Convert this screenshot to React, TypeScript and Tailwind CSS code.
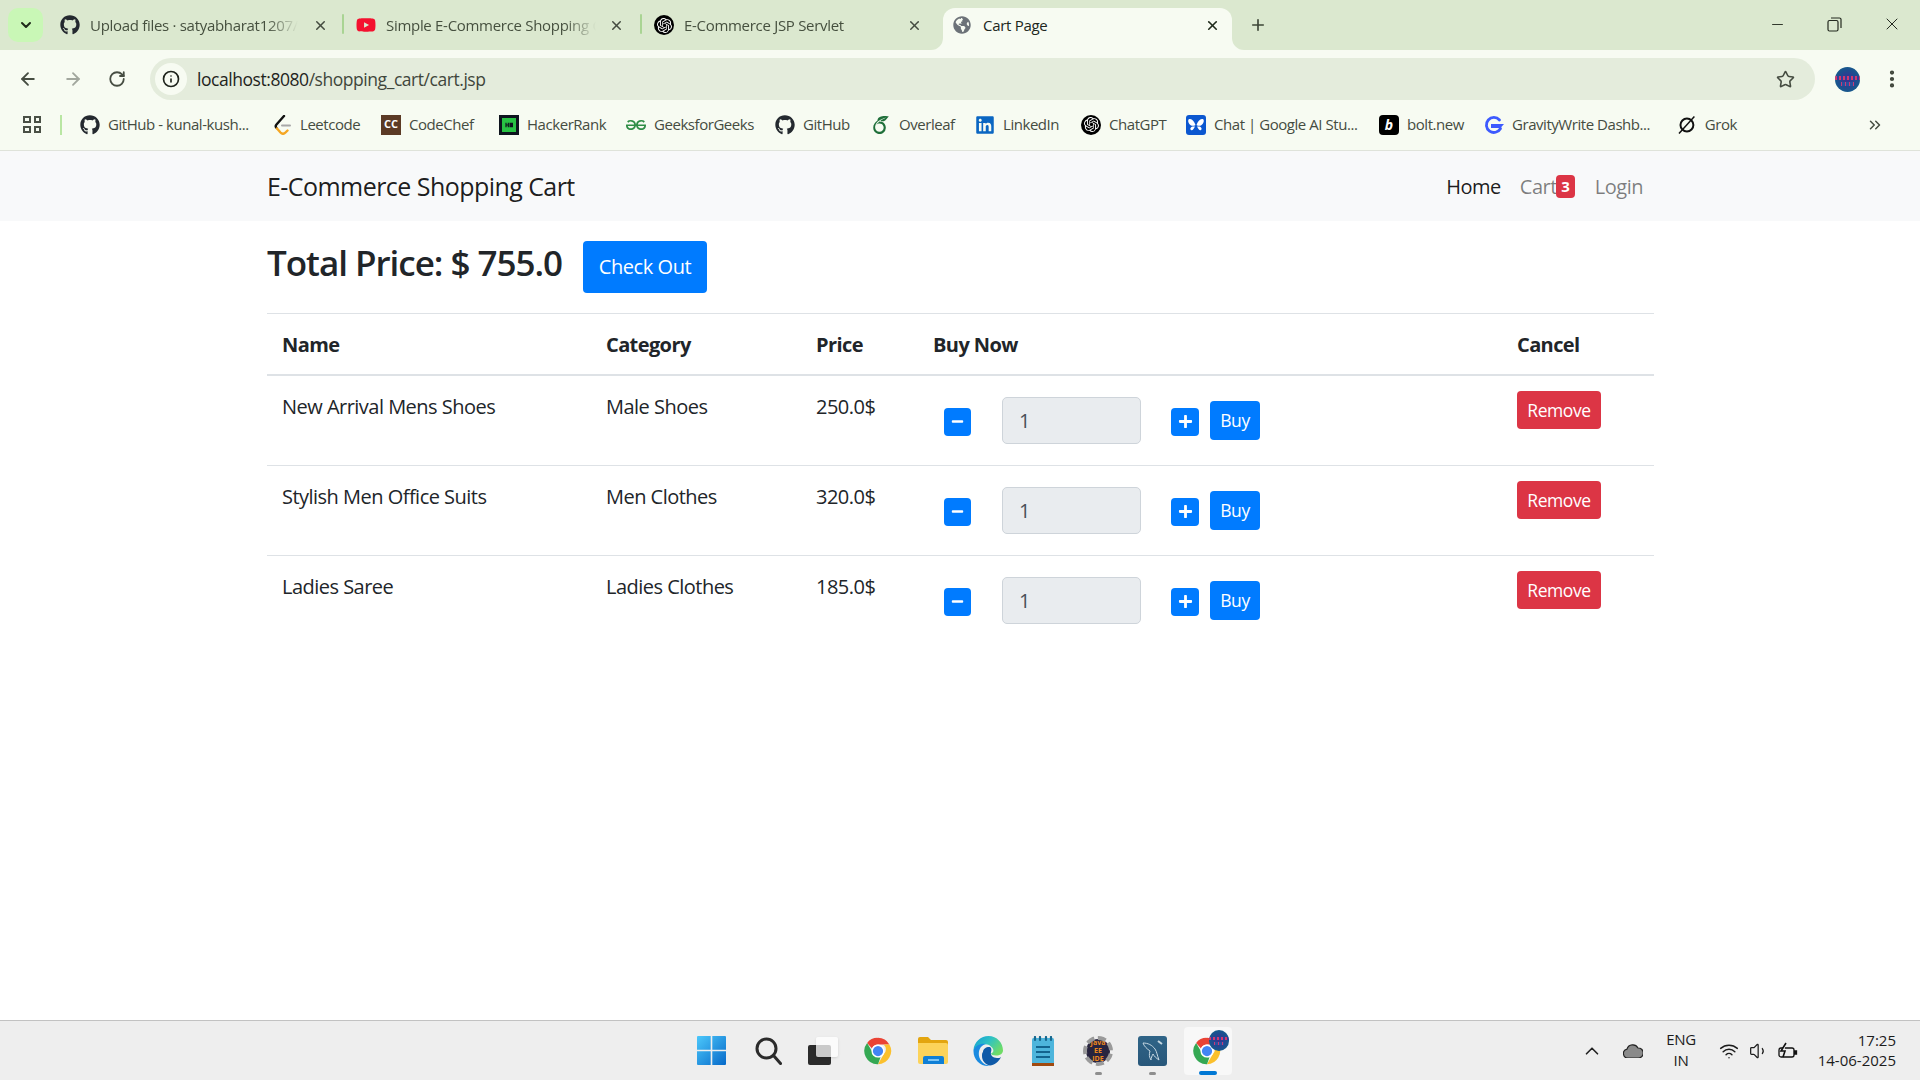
import type { ReactNode } from 'react';
import { ArrowLeft, ArrowRight, ChevronDown, ChevronUp, ChevronsRight, Info, Minus, MoreVertical, Plus, RotateCw, Star, Volume1, Wifi, X } from 'lucide-react';
import { FaGithub, FaGlobeAmericas, FaLinkedin, FaMinus, FaPlus, FaYoutube } from 'react-icons/fa';
import { SiGeeksforgeeks, SiHackerrank, SiOpenai, SiOverleaf } from 'react-icons/si';

const UI_FONT = "font-['Open_Sans','Noto_Sans',sans-serif]";

function GptIcon() {
  return (
    <span className="flex h-[20px] w-[20px] items-center justify-center rounded-full bg-black text-white">
      <SiOpenai className="h-[15px] w-[15px]" />
    </span>
  );
}

function ChromeLogo({ size }: { size: number }) {
  return (
    <svg width={size} height={size} viewBox="0 0 48 48">
      <path d="M24 3a21 21 0 0 1 18.2 10.500H24a10.500 10.500 0 0 0-9.600 6.300L6.600 11.100A21 21 0 0 1 24 3z" fill="#ea4335" />
      <path d="M42.200 13.500A21 21 0 0 1 24 45l9.100-15.700a10.500 10.500 0 0 0-.1-15.800z" fill="#fbc02d" />
      <path d="M6.600 11.100 15 25.600a10.500 10.500 0 0 0 13 8.200L24 45A21 21 0 0 1 6.600 11.100z" fill="#34a853" />
      <circle cx="24" cy="24" r="10.500" fill="#fff" />
      <circle cx="24" cy="24" r="8.200" fill="#4285f4" />
    </svg>
  );
}

function Avatar({ className }: { className: string }) {
  return (
    <span className={`block overflow-hidden rounded-full bg-[radial-gradient(circle_at_50%_50%,#3b2f8f_0%,#1c4f8f_55%,#0f6d86_100%)] ${className}`}>
      <span className="mt-[38%] block h-[14%] w-full bg-[repeating-linear-gradient(90deg,#d0386f_0_2px,#2c3f9c_2px_4px)]" />
      <span className="mx-[25%] mt-[10%] block h-[14%] bg-[repeating-linear-gradient(90deg,#c93a78_0_1px,#27509e_1px_4px)]" />
    </span>
  );
}

type TabInfo = { title: string; icon: ReactNode; titleW: string; tabW: string };

const TABS: TabInfo[] = [
  { title: 'Upload files · satyabharat1207/Simple', icon: <FaGithub className="h-[20px] w-[20px] text-[#24292f]" />, titleW: 'w-[208px]', tabW: 'w-[296px]' },
  { title: 'Simple E-Commerce Shopping Cart', icon: <FaYoutube className="h-[20px] w-[20px] text-[#f4112f]" />, titleW: 'w-[210px]', tabW: 'w-[298px]' },
  { title: 'E-Commerce JSP Servlet', icon: <GptIcon />, titleW: 'w-[210px]', tabW: 'w-[301px]' },
];

function BrowserTabs() {
  return (
    <div className={`flex h-[50px] items-end bg-[#dbe8cf] ${UI_FONT}`}>
      <button className="mb-[8px] ml-[8px] mr-[5px] flex h-[34px] w-[35px] items-center justify-center rounded-[10px] bg-[#c9f7b6]">
        <ChevronDown className="h-[16px] w-[16px] text-[#1f2a1a]" strokeWidth={3} />
      </button>
      {TABS.map((t, i) => (
        <div key={t.title} className={`relative flex h-[42px] items-center pb-[8px] pl-[12px] ${t.tabW}`}>
          {t.icon}
          <span className="ml-[10px] overflow-hidden whitespace-nowrap text-[15px] tracking-[-0.3px] text-[#46503f] [mask-image:linear-gradient(to_right,black_85%,transparent)]">
            <span className={`block ${t.titleW}`}>{t.title}</span>
          </span>
          <X className="absolute left-[265px] h-[15px] w-[15px] text-[#444b40]" strokeWidth={2.400} />
          {i < 2 && <span className="absolute right-0 top-[6px] h-[20px] w-[2px] rounded bg-[#a9d493]" />}
        </div>
      ))}
      <div className="relative flex h-[42px] w-[289px] items-center rounded-t-[12px] bg-[#f7fbf2] pb-[8px] pl-[10px]">
        <svg className="absolute -left-[12px] bottom-0" width="12" height="12" viewBox="0 0 12 12"><path d="M12 0v12H0a12 12 0 0 0 12-12z" fill="#f7fbf2" /></svg>
        <svg className="absolute -right-[12px] bottom-0" width="12" height="12" viewBox="0 0 12 12"><path d="M0 0v12h12A12 12 0 0 1 0 0z" fill="#f7fbf2" /></svg>
        <FaGlobeAmericas className="h-[18px] w-[18px] text-[#6c7278]" />
        <span className="ml-[12px] text-[15px] tracking-[-0.3px] text-[#20261c]">Cart Page</span>
        <X className="absolute right-[12px] h-[15px] w-[15px] text-[#1f2a1a]" strokeWidth={2.600} />
      </div>
      <div className="mb-[8px] ml-[16px] flex h-[34px] w-[20px] items-center justify-center">
        <Plus className="h-[18px] w-[18px] text-[#3d4637]" strokeWidth={2.200} />
      </div>
      <div className="mb-[10px] ml-auto flex h-[32px] items-center text-[#23291f]">
        <Minus className="mr-[41px] h-[17px] w-[17px]" strokeWidth={1.300} />
        <svg className="mr-[40px]" width="15" height="15" viewBox="0 0 15 15" fill="none" stroke="currentColor" strokeWidth="1.200"><rect x="1" y="3.500" width="10" height="10.500" rx="1.500" /><path d="M4 1h8.500A1.500 1.500 0 0 1 14 2.500V11" /></svg>
        <X className="mr-[18px] h-[20px] w-[20px]" strokeWidth={1.200} />
      </div>
    </div>
  );
}

function Toolbar() {
  return (
    <div className={`flex h-[50px] items-center bg-[#f7fbf2] pt-[8px] ${UI_FONT}`}>
      <ArrowLeft className="ml-[18px] h-[20px] w-[20px] text-[#464d42]" strokeWidth={2.200} />
      <ArrowRight className="ml-[25px] h-[20px] w-[20px] text-[#a2a79e]" strokeWidth={2.200} />
      <RotateCw className="ml-[25px] h-[18px] w-[18px] text-[#464d42]" strokeWidth={2.400} />
      <div className="ml-[24px] flex h-[42px] w-[1665px] items-center rounded-full bg-[#e4ecdc] pl-[5px] pr-[20px]">
        <span className="flex h-[32px] w-[32px] items-center justify-center rounded-full bg-[#f7fbf2]">
          <Info className="h-[18px] w-[18px] text-[#1f241c]" strokeWidth={2.200} />
        </span>
        <span className="ml-[10px] text-[17.500px] tracking-[-0.45px] text-[#1f241c]">localhost:8080<span className="text-[#3f463b]">/shopping_cart/cart.jsp</span></span>
        <Star className="ml-auto h-[19px] w-[19px] text-[#454c41]" strokeWidth={2} />
      </div>
      <Avatar className="ml-[20px] h-[25px] w-[25px]" />
      <MoreVertical className="ml-[21px] h-[22px] w-[22px] text-[#3c4338]" strokeWidth={2.600} />
    </div>
  );
}

function CodeTile({ className, children }: { className: string; children: ReactNode }) {
  return <span className={`flex h-[20px] w-[20px] items-center justify-center ${className}`}>{children}</span>;
}

const BOOKMARKS = [
  { label: 'GitHub - kunal-kush...', slot: 'w-[194px]', icon: <FaGithub className="h-[20px] w-[20px] text-[#24292f]" /> },
  {
    label: 'Leetcode',
    slot: 'w-[107px]',
    icon: (
      <svg width="18" height="20" viewBox="0 0 18 20" fill="none" strokeWidth="2.400" strokeLinecap="round">
        <path d="M10 1 2.500 9.500c-1 1.200-1 2.500 0 3.500" stroke="#111" />
        <path d="M3 13.500 6.500 17.500c1.500 1.500 3.500 1.500 5 0l2-2" stroke="#f5a623" />
        <path d="M8 10.500h8" stroke="#a8a8a8" strokeWidth="2" />
      </svg>
    ),
  },
  { label: 'CodeChef', slot: 'w-[118px]', icon: <CodeTile className="bg-[#5b3a25] text-[11px] font-bold text-white">CC</CodeTile> },
  { label: 'HackerRank', slot: 'w-[127px]', icon: <CodeTile className="bg-[#0e141e] text-white"><SiHackerrank className="h-[14px] w-[14px] text-[#28c244]" /></CodeTile> },
  { label: 'GeeksforGeeks', slot: 'w-[149px]', icon: <SiGeeksforgeeks className="h-[20px] w-[20px] text-[#2f8d46]" /> },
  { label: 'GitHub', slot: 'w-[96px]', icon: <FaGithub className="h-[20px] w-[20px] text-[#24292f]" /> },
  { label: 'Overleaf', slot: 'w-[104px]', icon: <SiOverleaf className="h-[18px] w-[20px] text-[#1f6f3a]" /> },
  { label: 'LinkedIn', slot: 'w-[106px]', icon: <FaLinkedin className="h-[20px] w-[20px] text-[#0a66c2]" /> },
  { label: 'ChatGPT', slot: 'w-[105px]', icon: <GptIcon /> },
  {
    label: 'Chat | Google AI Stu...',
    slot: 'w-[193px]',
    icon: (
      <svg width="20" height="20" viewBox="0 0 20 20">
        <rect width="20" height="20" rx="3" fill="#0b57d0" />
        <path d="M9.500 10C8 6 6 3.500 3.500 4S2.500 9 5 10.500c1.500.6 3 .5 4.500-.5zM10.500 10C12 6 14 3.500 16.500 4s1 5-1.500 6.500c-1.500.6-3 .5-4.500-.5z" fill="#fff" />
        <path d="M9 11.500c-1 2-2.500 4.500-4 3.500s0-3 1.500-3.500zM11 11.500c1 2 2.500 4.500 4 3.500s0-3-1.500-3.500z" fill="#fff" />
      </svg>
    ),
  },
  { label: 'bolt.new', slot: 'w-[105px]', icon: <CodeTile className="rounded-[4px] bg-black text-[14px] font-bold italic text-white">b</CodeTile> },
  {
    label: 'GravityWrite Dashb...',
    slot: 'w-[193px]',
    icon: (
      <svg width="20" height="20" viewBox="0 0 20 20" fill="none">
        <path d="M15.500 5A7.500 7.500 0 1 0 16.500 13.500" stroke="#3d5afe" strokeWidth="2.800" strokeLinecap="round" />
        <path d="M7 9h13l-3.500 4H7z" fill="#3d5afe" />
      </svg>
    ),
  },
  { label: 'Grok', slot: 'w-[60px]', icon: <svg width="20" height="20" viewBox="0 0 20 20" fill="none" stroke="#111" strokeWidth="2"><circle cx="10" cy="10" r="6.500" /><path d="M17.500 1.500 2 18.500" strokeWidth="1.500" /></svg> },
];

function BookmarksBar() {
  return (
    <div className={`flex h-[51px] items-center border-b border-[#dfe3da] bg-[#f7fbf2] pb-[1px] ${UI_FONT}`}>
      <span className="ml-[23px] grid h-[17px] w-[18px] grid-cols-2 gap-[3px]">
        <i className="border-2 border-[#4a5046]" />
        <i className="border-2 border-[#4a5046]" />
        <i className="border-2 border-[#4a5046]" />
        <i className="border-2 border-[#4a5046]" />
      </span>
      <span className="ml-[19px] mr-[18px] h-[20px] w-[2px] bg-[#b9e6a3]" />
      {BOOKMARKS.map((b) => (
        <div key={b.label} className={`flex shrink-0 items-center gap-[8px] ${b.slot}`}>
          {b.icon}
          <span className="whitespace-nowrap text-[15px] tracking-[-0.45px] text-[#454c41]">{b.label}</span>
        </div>
      ))}
      <ChevronsRight className="ml-[129px] h-[18px] w-[18px] text-[#454c41]" strokeWidth={2} />
    </div>
  );
}

function Navbar() {
  return (
    <nav className="h-[70px] bg-[#f8f9fa]">
      <div className="ml-[267px] flex h-full w-[1376px] items-center justify-between pt-[2px]">
        <span className="text-[25px] tracking-[-0.55px] text-[#000000e6]">E-Commerce Shopping Cart</span>
        <div className="flex items-center text-[20px] tracking-[-0.5px]">
          <span className="text-[#000000e6]">Home</span>
          <span className="relative ml-[19px] w-[55px] text-[#00000080]">
            Cart
            <span className="absolute left-[36px] top-[3px] flex h-[23px] w-[19px] items-center justify-center rounded-[4px] bg-[#dc3545] text-[15px] font-bold text-white">3</span>
          </span>
          <span className="ml-[20px] text-[#00000080]">Login</span>
        </div>
      </div>
    </nav>
  );
}

const ITEMS = [
  { name: 'New Arrival Mens Shoes', category: 'Male Shoes', price: '250.0$' },
  { name: 'Stylish Men Office Suits', category: 'Men Clothes', price: '320.0$' },
  { name: 'Ladies Saree', category: 'Ladies Clothes', price: '185.0$' },
];

function CartTable() {
  const th = 'border-t border-b-2 border-t-[#dee2e6] border-b-[#dee2e6] px-[15px] pb-[14px] pt-[16px] text-left align-top font-bold tracking-[-0.6px]';
  return (
    <table className="w-[1387px] table-fixed border-separate border-spacing-0 text-[20px] tracking-[-0.52px] text-[#212529]">
      <thead>
        <tr>
          <th className={`w-[324px] ${th}`}>Name</th>
          <th className={`w-[210px] ${th}`}>Category</th>
          <th className={`w-[117px] ${th}`}>Price</th>
          <th className={`w-[584px] ${th}`}>Buy Now</th>
          <th className={`w-[152px] ${th}`}>Cancel</th>
        </tr>
      </thead>
      <tbody>
        {ITEMS.map((item, i) => {
          const td = `px-[15px] pb-[15px] pt-[15px] align-top font-normal ${i > 0 ? 'border-t border-[#dee2e6]' : ''}`;
          const textTd = `px-[15px] pb-[14px] pt-[16px] align-top font-normal ${i > 0 ? 'border-t border-[#dee2e6]' : ''}`;
          return (
            <tr key={item.name}>
              <td className={textTd}>{item.name}</td>
              <td className={textTd}>{item.category}</td>
              <td className={textTd}>{item.price}</td>
              <td className={td}>
                <div className="flex h-[59px] items-center">
                  <button className="ml-[11px] mt-[2px] flex h-[28px] w-[27px] items-center justify-center rounded-[4px] bg-[#007bff] text-white">
                    <FaMinus className="h-[13px] w-[13px]" />
                  </button>
                  <input
                    readOnly
                    value="1"
                    className="ml-[31px] h-[47px] w-[139px] rounded-[5px] border border-[#ced4da] bg-[#e9ecef] pl-[16px] text-[20px] text-[#495057]"
                  />
                  <button className="ml-[30px] mt-[2px] flex h-[28px] w-[28px] items-center justify-center rounded-[4px] bg-[#007bff] text-white">
                    <FaPlus className="h-[15px] w-[15px]" />
                  </button>
                  <button className="ml-[11px] h-[39px] w-[50px] rounded-[4px] bg-[#007bff] text-[17.500px] tracking-[-0.4px] text-white">Buy</button>
                </div>
              </td>
              <td className={td}>
                <button className="block h-[38px] w-[84px] rounded-[4px] bg-[#dc3545] text-[17.500px] tracking-[-0.4px] text-white">Remove</button>
              </td>
            </tr>
          );
        })}
      </tbody>
    </table>
  );
}

function Taskbar() {
  return (
    <div className={`relative flex h-[60px] items-center border-t border-[#c2c2c2] bg-[#eeeeee] ${UI_FONT}`}>
      <div className="ml-[697px] flex items-center">
        {/* Windows */}
        <svg width="29" height="29" viewBox="0 0 29 29">
          <defs>
            <linearGradient id="win" x1="0" y1="0" x2="1" y2="1"><stop offset="0" stopColor="#4cc8fb" /><stop offset="1" stopColor="#0669c9" /></linearGradient>
          </defs>
          <path d="M1 0h12.700v13.700H0V1a1 1 0 0 1 1-1zM15.300 0H28a1 1 0 0 1 1 1v12.700H15.300zM0 15.300h13.700V29H1a1 1 0 0 1-1-1zM15.300 15.300H29V28a1 1 0 0 1-1 1H15.300z" fill="url(#win)" />
        </svg>
        {/* Search */}
        <svg className="ml-[29px]" width="27" height="28" viewBox="0 0 27 28" fill="none" stroke="#2b2b2b" strokeWidth="3"><circle cx="11.500" cy="11.500" r="9.500" /><path d="m18.500 18.500 7 8" strokeLinecap="round" /></svg>
        {/* Task view */}
        <span className="relative ml-[26px] block h-[28px] w-[30px]">
          <span className="absolute bottom-0 left-0 h-[20px] w-[23px] rounded-[2px] bg-[#2b2b2b]" />
          <span className="absolute right-0 top-0 h-[20px] w-[22px] rounded-[2px] bg-[#ffffffc0] shadow-sm" />
        </span>
        <span className="ml-[25px] block"><ChromeLogo size={30} /></span>
        {/* Explorer */}
        <svg className="ml-[25px]" width="30" height="27" viewBox="0 0 30 27">
          <path d="M0 2a2 2 0 0 1 2-2h8l3 3h15a2 2 0 0 1 2 2v4H0z" fill="#e3a50f" />
          <path d="M0 6h28a2 2 0 0 1 2 2v17a2 2 0 0 1-2 2H2a2 2 0 0 1-2-2z" fill="#fcd35a" />
          <path d="M5 21a2 2 0 0 1 2-2h17a2 2 0 0 1 2 2v6H5z" fill="#0f7fd6" />
          <rect x="10" y="22" width="11" height="2" fill="#7cc4f5" />
        </svg>
        {/* Edge */}
        <svg className="ml-[25px]" width="30" height="30" viewBox="0 0 30 30">
          <defs>
            <linearGradient id="edgeA" x1="0" y1="0" x2="1" y2="0.600"><stop offset="0" stopColor="#0f9bd7" /><stop offset="0.500" stopColor="#2fc2c4" /><stop offset="1" stopColor="#6fdc66" /></linearGradient>
          </defs>
          <path d="M0.500 14C1 6 8 0 15.500 0 24 0 30 7 30 14.500c0 3-3 5-7 5-3 0-5-1-5-2 3-1 3-4 1-6-2-3-6-4-9-3-5 1-8 4-9.500 5.500z" fill="url(#edgeA)" />
          <path d="M0.500 14C3 9 8 7 13 8c-5 1-8 6-7 12 1 5 5 9 11 9.800C8 31 0 24 0.500 14z" fill="#1a8ae0" />
          <path d="M10 16c0-3 3-5 6-5 2 0 3 2 2 5-1 3 2 6 6 6 2 0 3 0 4-1-2 5-7 8-11 8.500-5-1-8-5-8-9.500 0-2 0-3 1-4z" fill="#0f5aa8" />
        </svg>
        {/* Notepad */}
        <svg className="ml-[29px]" width="22" height="30" viewBox="0 0 22 30">
          <rect x="0" y="2" width="22" height="26" rx="1.500" fill="#4db5dc" />
          <rect x="0" y="27" width="22" height="3" fill="#a04a10" />
          <path d="M3 1v3M8 1v3M14 1v3M19 1v3" stroke="#17688f" strokeWidth="2.200" strokeLinecap="round" />
          <path d="M4 11h14M4 16h14M4 21h14" stroke="#12648f" strokeWidth="2" />
        </svg>
        {/* Java EE IDE */}
        <span className="relative ml-[29px] flex h-[30px] w-[30px] items-center justify-center">
          <span className="absolute inset-0 rounded-full border-[4px] border-dashed border-[#9a9a9a]" />
          <span className="flex h-[24px] w-[24px] items-center justify-center rounded-full bg-[#28243f] text-center text-[7px] font-bold leading-[8px] text-[#f08a1c]">Java EE<br />IDE</span>
          <span className="absolute -bottom-[9px] h-[3px] w-[7px] rounded-full bg-[#8e8e8e]" />
        </span>
        {/* MySQL */}
        <span className="relative ml-[25px] flex h-[30px] w-[29px] items-center justify-center rounded-[3px] bg-[linear-gradient(180deg,#2f6487,#28577a)]">
          <svg width="26" height="26" viewBox="0 0 26 26" fill="none" stroke="#c5d7e2" strokeWidth="1"><path d="M3 5c5 0 9 2 12 6 2 3 2 6 4 11-3-2-5-4-6-6-1 2-2 4-2 6-2-3-2-6-1-9C7 11 4 8 3 5z" /><path d="m18 3 4 3" strokeWidth="2" /></svg>
          <span className="absolute -bottom-[9px] h-[3px] w-[7px] rounded-full bg-[#8e8e8e]" />
        </span>
        {/* Active Chrome */}
        <span className="relative ml-[17px] flex h-[48px] w-[48px] items-center justify-center rounded-[4px] bg-[#f8f8f8] pr-[2px]">
          <ChromeLogo size={30} />
          <Avatar className="absolute left-[25px] top-[3px] h-[21px] w-[20px]" />
          <span className="absolute bottom-0 left-[15px] h-[4px] w-[18px] rounded-full bg-[#0078d4]" />
        </span>
      </div>
      <div className="ml-auto flex items-center text-[#1c1c1c]">
        <ChevronUp className="h-[22px] w-[22px] text-[#222]" strokeWidth={1.800} />
        <svg className="ml-[20px]" width="20" height="14" viewBox="0 0 20 14"><path d="M5 14a4.500 4.500 0 0 1-1-8.900 6 6 0 0 1 11-1.100A5 5 0 0 1 15.500 14z" fill="#8a8a8a" stroke="#222" strokeWidth="1.200" /></svg>
        <div className="mb-[2px] ml-[23px] w-[30px] text-center text-[15px] leading-[21px] tracking-[-0.3px]">ENG<br />IN</div>
        <Wifi className="ml-[23px] h-[20px] w-[20px]" strokeWidth={1.800} />
        <Volume1 className="ml-[10px] h-[20px] w-[20px]" strokeWidth={1.500} />
        <svg className="ml-[9px]" width="20" height="18" viewBox="0 0 20 18" fill="none" stroke="#111" strokeWidth="1.300"><rect x="1" y="6" width="15" height="9" rx="2" /><path d="M16.500 9h2v3h-2z" fill="#111" /><path d="M8 1 3 9h4l-2 6" fill="#eee" strokeWidth="1.600" /></svg>
        <div className="mb-[2px] ml-[21px] mr-[24px] flex w-[77px] flex-col items-end whitespace-nowrap text-[15px] leading-[20px]">
          <span>17:25</span>
          <span>14-06-2025</span>
        </div>
      </div>
    </div>
  );
}

export default function App() {
  return (
    <div className={`flex h-screen flex-col overflow-hidden bg-white ${UI_FONT}`}>
      <BrowserTabs />
      <Toolbar />
      <BookmarksBar />
      <Navbar />
      <main className="ml-[267px] w-[1387px] flex-1">
        <div className="flex h-[92px] items-start pt-[20px]">
          <h3 className="mt-[1px] w-[316px] whitespace-nowrap text-[35px] font-semibold leading-[42px] tracking-[-1.02px] text-[#212529]">Total Price: $ 755.0</h3>
          <button className="h-[52px] w-[124px] rounded-[4px] bg-[#007bff] text-[20px] tracking-[-0.45px] text-white">Check Out</button>
        </div>
        <CartTable />
      </main>
      <Taskbar />
    </div>
  );
}
